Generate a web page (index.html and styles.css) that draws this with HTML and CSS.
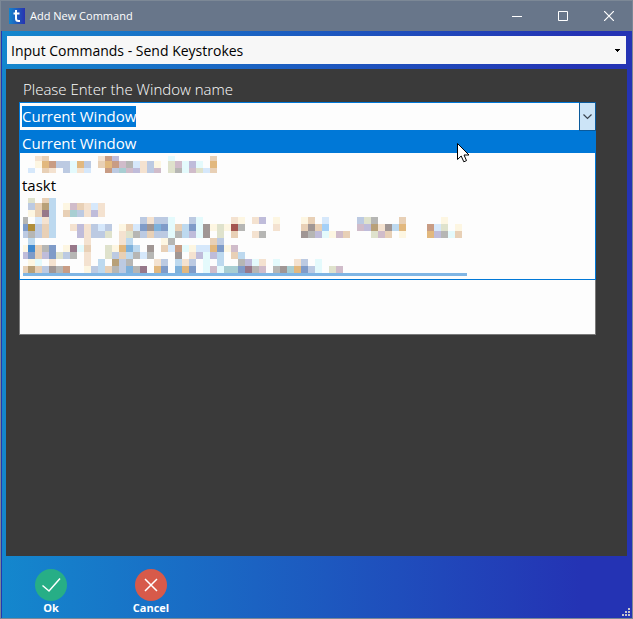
FILE: index.html
```html
<!DOCTYPE html>
<html lang="en">
<head>
<meta charset="utf-8">
<title>Add New Command</title>
<link rel="stylesheet" href="styles.css">
</head>
<body>
<div class="window">
  <header class="titlebar">
    <svg class="logo" width="16" height="16" viewBox="0 0 16 16" aria-hidden="true">
      <defs><linearGradient id="lg"><stop offset="0" stop-color="#1584cb"/><stop offset="1" stop-color="#2732b0"/></linearGradient></defs>
      <rect width="16" height="16" fill="url(#lg)"/>
      <path d="M7 2v8.500q0 2.500 2.500 2.500h1.500M4.500 5.500h6" fill="none" stroke="#fff" stroke-width="2"/>
    </svg>
    <h1 class="title">Add New Command</h1>
    <button class="caption" aria-label="Minimize"><svg width="10" height="10" viewBox="0 0 10 10"><path d="M0 5.500h10" stroke="#fff"/></svg></button>
    <button class="caption" aria-label="Maximize"><svg width="10" height="10" viewBox="0 0 10 10"><path d="M.5.5h9v9h-9z" fill="none" stroke="#fff"/></svg></button>
    <button class="caption" aria-label="Close"><svg width="10" height="10" viewBox="0 0 10 10"><path d="M0 0l10 10M10 0L0 10" stroke="#fff" stroke-width="1.200"/></svg></button>
  </header>
  <main class="content">
    <select class="command" aria-label="Command">
      <option>Input Commands - Send Keystrokes</option>
    </select>
    <section class="panel">
      <label class="label" for="window-name">Please Enter the Window name</label>
      <div class="combo">
        <input class="value" id="window-name" type="text" value="Current Window">
        <button class="toggle" aria-label="Show windows"><svg width="9" height="6" viewBox="0 0 9 6"><path d="M.5.5l4 4 4-4" fill="none" stroke="#3c4650" stroke-width="1.200"/></svg></button>
      </div>
      <ul class="list">
        <li class="item selected">Current Window
          <svg class="pointer" width="13" height="20" viewBox="0 0 13 20" aria-hidden="true"><path d="M.5.5v16l3.700-3.500 2.600 5.800 2.700-1.200L7 12h5z" fill="#fff" stroke="#000"/></svg>
        </li>
        <li><svg class="mosaic" id="blocks-a" width="460" height="21" viewBox="23 153 460 21" aria-hidden="true"></svg></li>
        <li class="item">taskt</li>
        <li><svg class="mosaic" id="blocks-b" width="460" height="84" viewBox="23 195 460 84" aria-hidden="true"></svg></li>
      </ul>
      <textarea class="keys" aria-label="Text to send"></textarea>
    </section>
    <footer class="actions">
      <button class="action"><svg width="34" height="34" viewBox="0 0 34 34"><circle cx="17" cy="17" r="16" fill="#27ae86"/><path d="M8.500 17.500l6.500 5.500 11-12.500" fill="none" stroke="#fff" stroke-width="1.500"/></svg>Ok</button>
      <button class="action"><svg width="34" height="34" viewBox="0 0 34 34"><circle cx="17" cy="17" r="16" fill="#d75a4a"/><path d="M11 11l12 12M23 11L11 23" stroke="#fff" stroke-width="1.500"/></svg>Cancel</button>
      <svg class="grip" width="8" height="8" viewBox="0 0 8 8" aria-hidden="true"><path d="M6 0h2v2H6zM3 3h2v2H3zM6 3h2v2H6zM0 6h2v2H0zM3 6h2v2H3zM6 6h2v2H6z" fill="#c8c4cc"/></svg>
    </footer>
  </main>
</div>
<script src="mosaic.js"></script>
</body>
</html>
```
FILE: mosaic.js
```js
// Censored entries: each letter is one 7px block, each row starts at the list's left edge.
const palette = {
  p: "#f4e2d0", t: "#e8d0b6", o: "#e2b87e", k: "#c89c84", b: "#bccae2", B: "#7f9bc8",
  s: "#bdd9ef", S: "#7eb1db", K: "#4089cf", l: "#bfbcda", c: "#e4fafc", y: "#fdf6e2",
  g: "#b6b6b4", G: "#a09694", w: "#d6e8fb", n: "#d0bcca", m: "#97788a", d: "#b08e3c",
  r: "#a45450", e: "#dfe2cc", q: "#a8ced2", a: "#a4d0f8", h: "#b8a078"
};
const firstEntry = [
  [154, "..pt.......pkl.......c.....t"],
  [161, "..yokbbcob.tokngwpby.enclc.o"],
  [168, ".w.tp.bcpw..kbqnlpbn.egcnewt"]
];
const lastEntries = [
  [196, ".e.ts"],
  [203, ".bths.yntpwp"],
  [210, ".ytms.tqbplp"],
  [217, "g.wps............bpbbc..bc....py.pl.y...yt.w....beg...t.....y"],
  [224, "Bdbts..plpbwb.ytwBGSBctsBcGyeyrg....p...tGta....nlhpGso...kwe.y"],
  [231, "bgbts...lpbbe.pegbtbbcgslcG.e.t..pg.....Gglcynt...ent.y...olgct"],
  [238, ".s.......p....ps....yg.....tb"],
  [245, "yKtgB.ymct..eyoSs.G.twkcywwoByn"],
  [252, "lBtlBebg.p..ebtsgwg...G.plcls.ts"],
  [259, ".yc.p....p.s.hbg...pb.spb.c.s..glcp.c..pb.c"],
  [266, "thtbGgk..ybstgbSgm.oB.SoB.cncqqBmgn.gGqoBbc.en"]
];
function draw(id, rows, y0, y1) {
  const svg = document.getElementById(id);
  const add = (x, y, w, h, fill) => {
    const r = document.createElementNS("http://www.w3.org/2000/svg", "rect");
    for (const [k, v] of Object.entries({ x, y, width: w, height: h, fill })) r.setAttribute(k, v);
    svg.append(r);
  };
  for (const [y, cells] of rows) {
    const from = Math.max(y, y0), to = Math.min(y + 7, y1);
    [...cells].forEach((c, i) => { if (palette[c]) add(21 + i * 7, from, 7, to - from, palette[c]); });
  }
  return add;
}
draw("blocks-a", firstEntry, 156, 173);
const add = draw("blocks-b", lastEntries, 198, 273);
add(23, 273, 444, 3, "#7fb5e4");
```
FILE: styles.css
```css
* { box-sizing: border-box; }
body {
  margin: 0;
  font-family: "Open Sans", "Noto Sans", sans-serif;
  font-size: 15px;
  line-height: 21px;
  color: #000;
}
button { border: 0; padding: 0; background: none; font: inherit; color: inherit; }
svg { display: block; }
.window {
  display: flex;
  flex-direction: column;
  min-height: 100vh;
  border: 1px solid #7c8896;
  background: #68768a;
}
.titlebar { display: flex; align-items: center; height: 30px; padding-left: 8px; }
.title { flex: 1; margin: 0 0 0 5px; font-size: 11px; font-weight: 400; line-height: 20px; color: #fff; }
.caption { display: flex; align-items: center; justify-content: center; width: 46px; height: 30px; }
.content {
  flex: 1;
  display: flex;
  flex-direction: column;
  padding: 5px 5px 0 4px;
  border-left: 1px solid #2438b0;
  background: linear-gradient(to right, #1487cd, #2433b4 92%);
}
.command {
  appearance: none;
  height: 28px;
  margin: 0 1px 5px;
  padding: 0 4px;
  border: 0;
  border-radius: 0;
  font: inherit;
  font-size: 14px;
  color: #000;
  background: linear-gradient(#000, #000) right 6px top 13px / 5px 1px no-repeat,
    linear-gradient(#000, #000) right 7px top 14px / 3px 1px no-repeat,
    linear-gradient(#000, #000) right 8px top 15px / 1px 1px no-repeat, #f7f7f7;
}
.panel { flex: 1; display: flex; flex-direction: column; padding: 10px 31px 0 13px; background: #3a3a3a; }
.label { padding: 0 4px; margin-bottom: 2px; font-weight: 300; color: #fff; }
.combo { display: flex; align-items: center; justify-content: space-between; height: 29px; border: 1px solid #0078d7; background: #fdfdfd; padding-left: 2px; }
.value { field-sizing: content; height: 21px; padding: 0; border: 0; font: inherit; color: #fff; background: #0078d7; outline: 0; }
.toggle { display: flex; align-items: center; justify-content: center; align-self: stretch; width: 17px; margin: -1px; border: 1px solid #0a5a9c; background: #cce4f7; }
.list { list-style: none; margin: 0; padding: 1px 0 0; border: 1px solid #0078d7; border-top: 0; background: #fdfdfd; }
.item { position: relative; height: 21px; padding: 0 2px; line-height: 23px; }
.selected { color: #fff; background: #0078d7; box-shadow: 0 -1px #0078d7; }
.pointer { position: absolute; left: 76%; top: 11px; }
.mosaic { margin-left: 3px; }
.keys { height: 55px; border: 1px solid #7a7a7a; border-top: 0; border-radius: 0; resize: none; background: #fdfdfd; outline: 0; }
.actions { position: relative; display: flex; gap: 40px; height: 62px; padding: 12px 0 0 15px; }
.action { display: flex; flex-direction: column; align-items: center; width: 60px; font-size: 11px; font-weight: 700; line-height: 12px; color: #fff; }
.grip { position: absolute; right: -3px; bottom: 2px; }
```
